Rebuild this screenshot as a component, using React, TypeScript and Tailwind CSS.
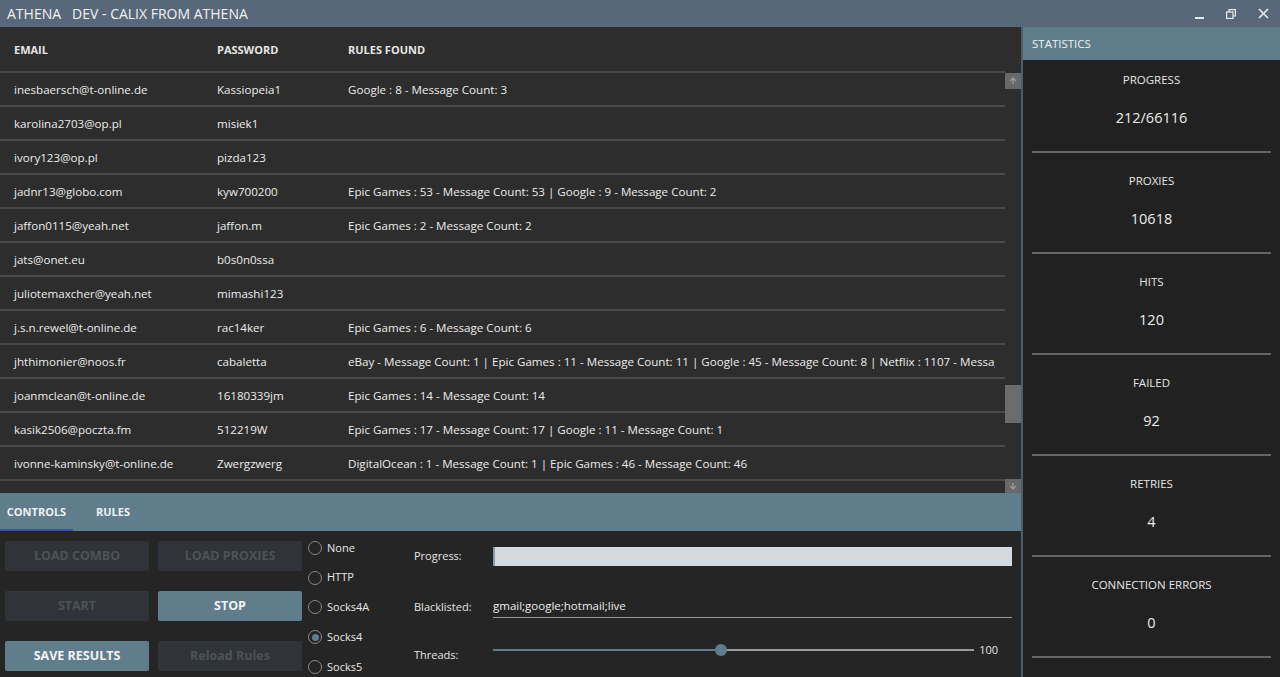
import React from 'react';

const rows: [string, string, string][] = [
  ['inesbaersch@t-online.de', 'Kassiopeia1', 'Google : 8 - Message Count: 3'],
  ['karolina2703@op.pl', 'misiek1', ''],
  ['ivory123@op.pl', 'pizda123', ''],
  ['jadnr13@globo.com', 'kyw700200', 'Epic Games : 53 - Message Count: 53 | Google : 9 - Message Count: 2'],
  ['jaffon0115@yeah.net', 'jaffon.m', 'Epic Games : 2 - Message Count: 2'],
  ['jats@onet.eu', 'b0s0n0ssa', ''],
  ['juliotemaxcher@yeah.net', 'mimashi123', ''],
  ['j.s.n.rewel@t-online.de', 'rac14ker', 'Epic Games : 6 - Message Count: 6'],
  ['jhthimonier@noos.fr', 'cabaletta', 'eBay - Message Count: 1 | Epic Games : 11 - Message Count: 11 | Google : 45 - Message Count: 8 | Netflix : 1107 - Message Count: 1107'],
  ['joanmclean@t-online.de', '16180339jm', 'Epic Games : 14 - Message Count: 14'],
  ['kasik2506@poczta.fm', '512219W', 'Epic Games : 17 - Message Count: 17 | Google : 11 - Message Count: 1'],
  ['ivonne-kaminsky@t-online.de', 'Zwergzwerg', 'DigitalOcean : 1 - Message Count: 1 | Epic Games : 46 - Message Count: 46'],
  ['jlinamarina@t-online.de', 'linamarina', ''],
];

const stats: [string, string][] = [
  ['PROGRESS', '212/66116'],
  ['PROXIES', '10618'],
  ['HITS', '120'],
  ['FAILED', '92'],
  ['RETRIES', '4'],
  ['CONNECTION ERRORS', '0'],
];

const proxyTypes = ['None', 'HTTP', 'Socks4A', 'Socks4', 'Socks5'];

const Btn: React.FC<{ label: string; active?: boolean; upper?: boolean }> = ({ label, active, upper = true }) => (
  <div
    className={`w-[144px] h-[30px] rounded-[2px] flex items-center justify-center text-[12.5px] font-bold ${
      upper ? 'uppercase' : ''
    } ${active ? 'bg-[#607d8b] text-[#f2f4f5]' : 'bg-[#303438] text-[#4c5258]'}`}
  >
    {label}
  </div>
);

export default function App() {
  return (
    <div
      className="w-[1280px] h-[677px] overflow-hidden flex flex-col bg-[#2d2d2d] text-[#e8e8e8]"
      style={{ fontFamily: '"Open Sans", "Noto Sans", sans-serif' }}
    >
      {/* title bar */}
      <div className="h-[27px] shrink-0 bg-[#58687a] flex items-center pl-[7px] pr-[1px]">
        <span className="text-[14px] text-[#f0f2f4]">ATHENA</span>
        <span className="text-[14px] text-[#f0f2f4] ml-[11px]">DEV - CALIX FROM ATHENA</span>
        <div className="ml-auto flex items-center text-[#e8ecef]">
          <div className="w-[32px] flex justify-center pt-[3px]">
            <svg width="9" height="9" viewBox="0 0 9 9"><rect x="0" y="6" width="9" height="2" fill="currentColor" /></svg>
          </div>
          <div className="w-[32px] flex justify-center">
            <svg width="10" height="10" viewBox="0 0 10 10" fill="none" stroke="currentColor" strokeWidth="1.2">
              <rect x="0.6" y="3" width="6.4" height="6.4" />
              <path d="M3 3V0.6h6.4V7H7" />
            </svg>
          </div>
          <div className="w-[32px] flex justify-center">
            <svg width="11" height="11" viewBox="0 0 11 11" stroke="currentColor" strokeWidth="1.6">
              <path d="M1 1l9 9M10 1l-9 9" />
            </svg>
          </div>
        </div>
      </div>

      <div className="flex flex-1 min-h-0">
        {/* left */}
        <div className="w-[1023px] flex flex-col border-r-2 border-[#4e5d68]">
          <div className="h-[466px] flex shrink-0">
            <div className="w-[1007px] flex flex-col overflow-hidden">
              <div className="h-[46px] shrink-0 flex items-center pt-[3px] border-b-2 border-[#4a4a4a] text-[11px] font-bold text-[#e6e6e6]">
                <div className="w-[217px] pl-[14px]">EMAIL</div>
                <div className="w-[131px]">PASSWORD</div>
                <div>RULES FOUND</div>
              </div>
              {rows.map(([e, p, r], i) => (
                <div
                  key={i}
                  className="h-[34px] shrink-0 flex items-center pt-[1px] border-b-2 border-[#4a4a4a] text-[11.6px] text-[#ececec] whitespace-nowrap"
                >
                  <div className="w-[217px] pl-[14px] shrink-0">{e}</div>
                  <div className="w-[131px] shrink-0">{p}</div>
                  <div className="overflow-hidden flex-1 mr-[10px]">{r}</div>
                </div>
              ))}
            </div>
            {/* scrollbar */}
            <div className="w-[16px] flex flex-col bg-[#2d2d2d]">
              <div className="h-[46px]" />
              <div className="h-[16px] bg-[#686868] flex items-center justify-center">
                <svg width="8" height="8" viewBox="0 0 8 8" fill="none" stroke="#9a9a9a" strokeWidth="1.3"><path d="M4 7V1M1 4l3-3 3 3" /></svg>
              </div>
              <div className="h-[296px]" />
              <div className="h-[38px] bg-[#6c6c6c]" />
              <div className="flex-1" />
              <div className="h-[14px] bg-[#686868] flex items-center justify-center">
                <svg width="8" height="8" viewBox="0 0 8 8" fill="none" stroke="#9a9a9a" strokeWidth="1.3"><path d="M4 1v6M1 4l3 3 3-3" /></svg>
              </div>
            </div>
          </div>

          {/* tabs */}
          <div className="h-[38px] shrink-0 bg-[#607d8b] flex items-stretch text-[11px] font-bold text-[#eef2f4]">
            <div className="w-[73px] flex items-center justify-center border-b-2 border-[#3f51b5] pt-[2px]">CONTROLS</div>
            <div className="px-[23px] flex items-center">RULES</div>
          </div>

          {/* controls */}
          <div className="flex-1 bg-[#252525] flex pl-[5px] pt-[10px]">
            <div className="grid grid-cols-2 gap-x-[9px] gap-y-[20px] content-start w-[297px]">
              <Btn label="Load Combo" />
              <Btn label="Load Proxies" />
              <Btn label="Start" />
              <Btn label="Stop" active />
              <Btn label="Save Results" active />
              <Btn label="Reload Rules" upper={false} />
            </div>
            <div className="ml-[6px] flex flex-col -mt-[8px] w-[106px]">
              {proxyTypes.map((t) => (
                <div key={t} className="h-[29.75px] flex items-center gap-[5px] text-[11px] text-[#e8e8e8]">
                  <div className="w-[14px] h-[14px] rounded-full border-[1.5px] border-[#8a8a8a] flex items-center justify-center">
                    {t === 'Socks4' && <div className="w-[7px] h-[7px] rounded-full bg-[#607d8b]" />}
                  </div>
                  <span>{t}</span>
                </div>
              ))}
            </div>
            <div className="flex-1 flex flex-col pr-[9px] -mt-[2px]">
              <div className="h-[35px] flex items-center">
                <div className="w-[79px] text-[11px] text-[#e4e4e4]">Progress:</div>
                <div className="flex-1 h-[19px] bg-[#d2dadf] border-l-2 border-[#8d9aa3]" />
              </div>
              <div className="h-[51px] flex items-end pb-[7px]">
                <div className="w-[79px] text-[11px] text-[#e4e4e4] pb-[3px]">Blacklisted:</div>
                <div className="flex-1 text-[11.5px] text-[#ececec] border-b border-[#9a9a9a] pb-[3px]">gmail;google;hotmail;live</div>
              </div>
              <div className="h-[50px] flex items-center">
                <div className="w-[79px] text-[11px] text-[#e4e4e4] pt-[10px]">Threads:</div>
                <div className="flex-1 flex items-center">
                  <div className="relative flex-1 h-[2px] bg-[#9a9a9a]">
                    <div className="absolute left-0 top-0 h-[2px] w-[47.3%] bg-[#607d8b]" />
                    <div className="absolute left-[47.3%] top-[-5px] w-[12px] h-[12px] -ml-[6px] rounded-full bg-[#607d8b]" />
                  </div>
                  <div className="w-[38px] text-right pr-[14px] text-[11px] text-[#e4e4e4]">100</div>
                </div>
              </div>
            </div>
          </div>
        </div>

        {/* right stats */}
        <div className="flex-1 bg-[#212121] flex flex-col">
          <div className="h-[33px] shrink-0 bg-[#607d8b] flex items-center pl-[9px] text-[11.5px] text-[#eef2f4]">STATISTICS</div>
          {stats.map(([k, v], i) => (
            <div
              key={k}
              className={`shrink-0 mx-[9px] border-b-2 border-[#666] flex flex-col items-center ${
                i === 0 ? 'pt-[11px] pb-[23px]' : 'pt-[19px] pb-[23px]'
              }`}
            >
              <div className="h-[17px] leading-[17px] text-[11.5px] text-[#e6e6e6]">{k}</div>
              <div className="mt-[20px] h-[20px] leading-[20px] text-[14.5px] text-[#ececec]">{v}</div>
            </div>
          ))}
        </div>
      </div>
    </div>
  );
}
